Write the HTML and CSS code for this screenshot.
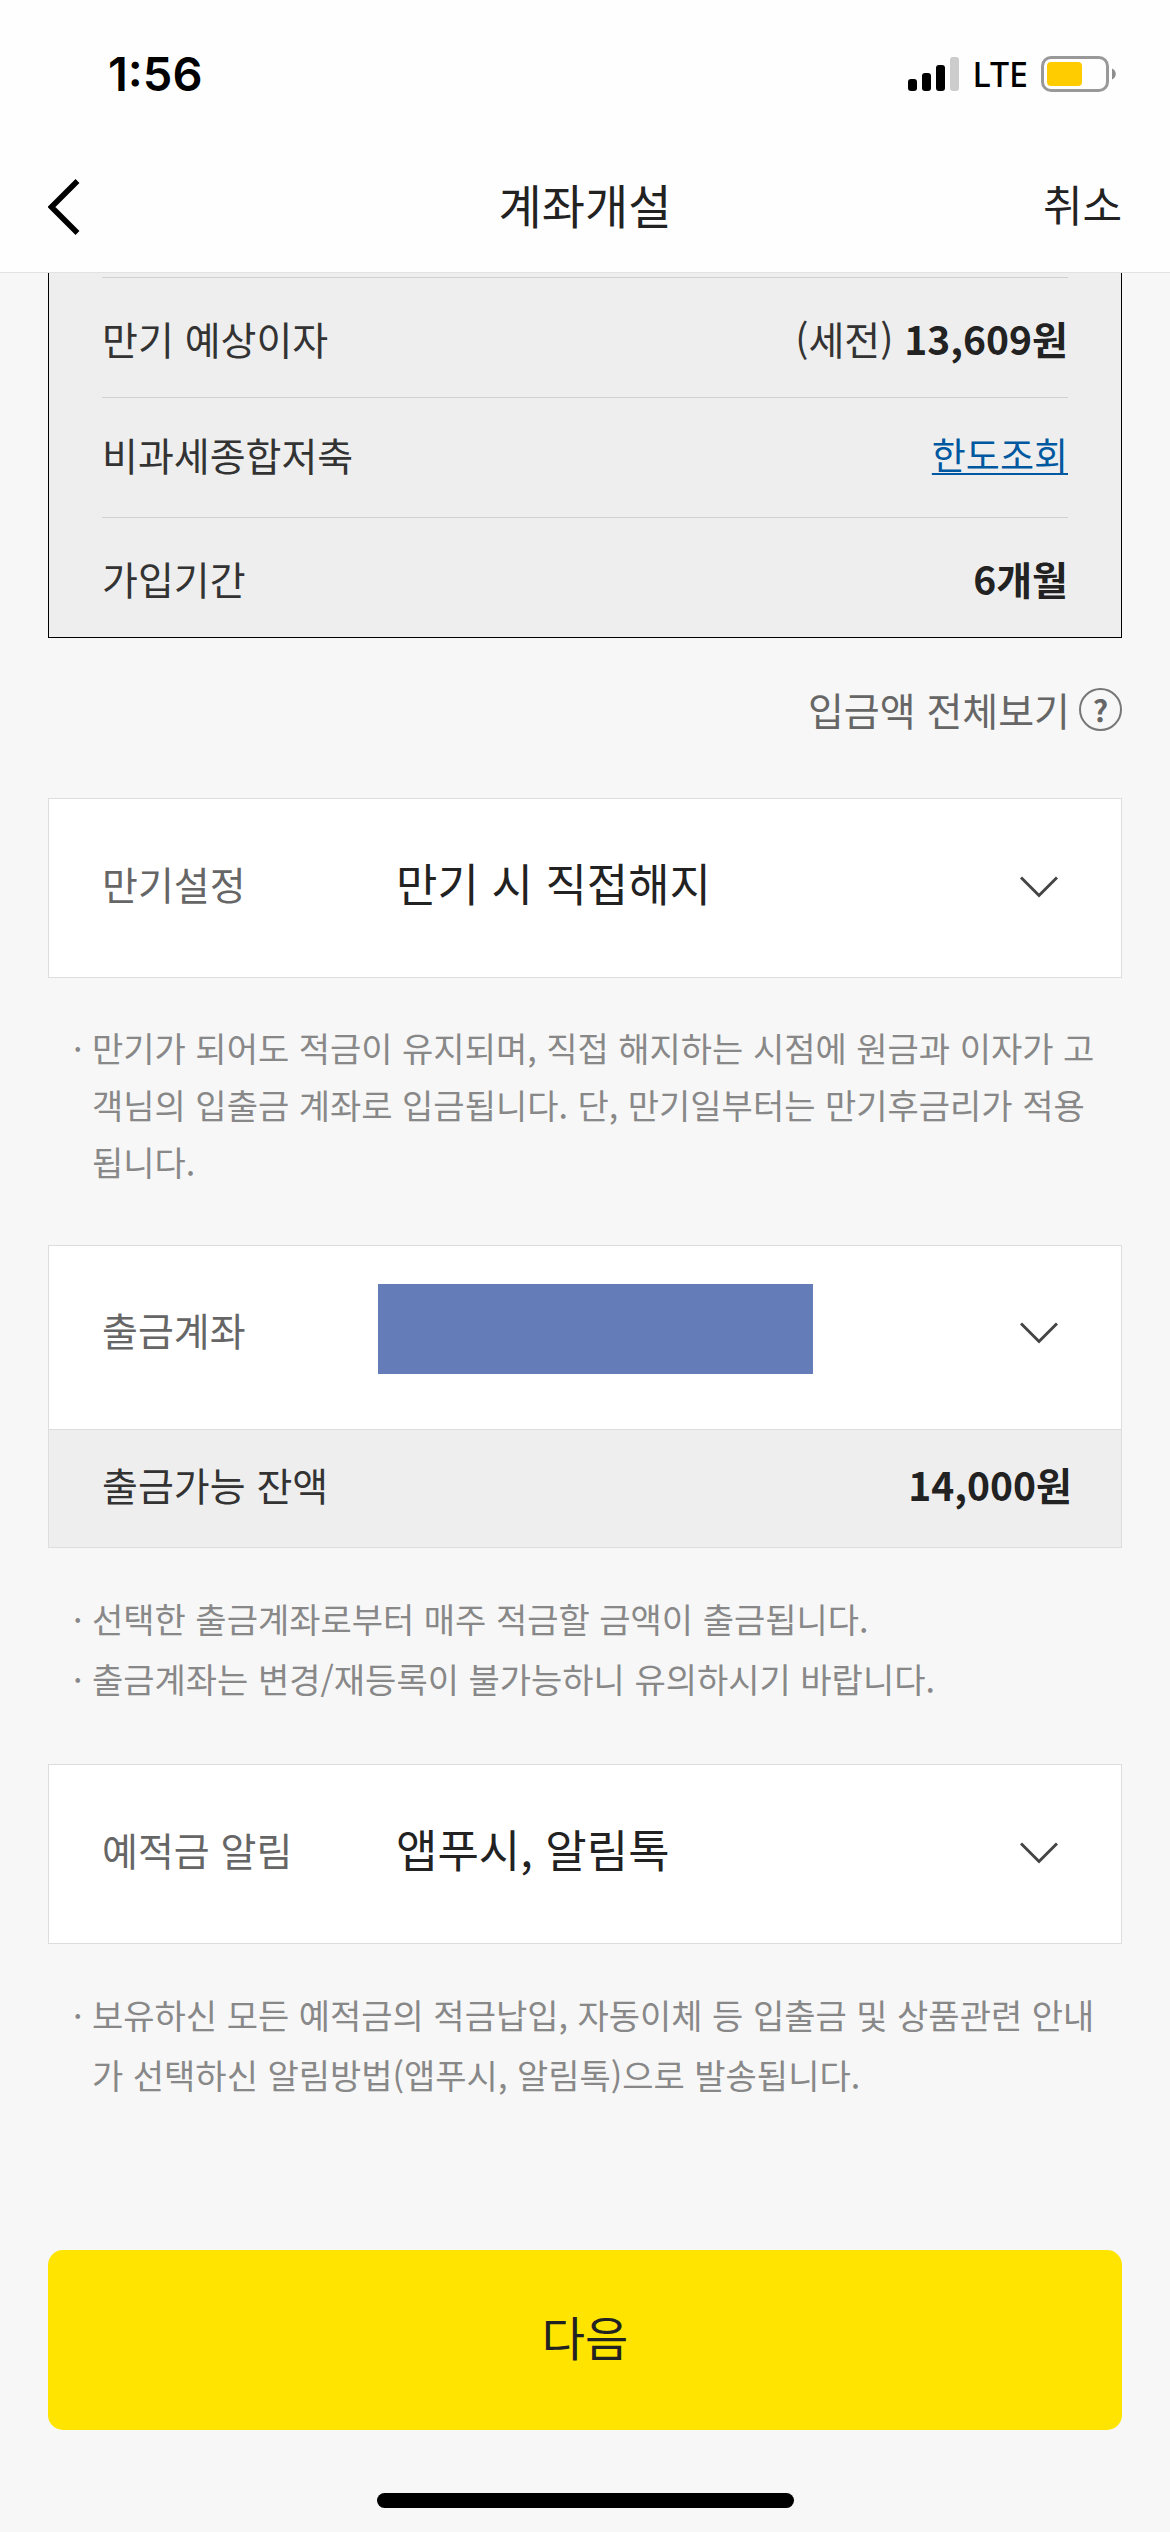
FILE: index.html
```html
<!DOCTYPE html>
<html lang="ko">
<head>
<meta charset="utf-8">
<meta name="viewport" content="width=device-width, initial-scale=1">
<title>계좌개설</title>
<link rel="stylesheet" href="styles.css">
</head>
<body>
<div class="screen">
  <div class="status-bar">
    <span class="clock">1:56</span>
    <div class="indicators">
      <svg class="signal" viewBox="0 0 51 34" aria-hidden="true">
        <rect x="0" y="22" width="9" height="12" rx="3"/>
        <rect x="14" y="16" width="9" height="18" rx="3"/>
        <rect x="28" y="8" width="9" height="26" rx="3"/>
        <rect x="42" y="0" width="9" height="34" rx="3" fill="#ccc"/>
      </svg>
      <span class="network">LTE</span>
      <svg class="battery" viewBox="0 0 76 36" aria-hidden="true">
        <rect x="1.5" y="1.5" width="65" height="33" rx="8.5" fill="none" stroke="#999" stroke-width="3"/>
        <rect x="6" y="6" width="35" height="24" rx="4" fill="#fc0"/>
        <path d="M71 12.5c5 2 5 9 0 11z" fill="#8e8e8e"/>
      </svg>
    </div>
  </div>

  <header class="nav-bar">
    <button class="back" type="button" aria-label="뒤로">
      <svg viewBox="0 0 32 56" aria-hidden="true"><path d="M29.5 2L3.5 28l26 26" fill="none" stroke="#000" stroke-width="5.5"/></svg>
    </button>
    <h1 class="title">계좌개설</h1>
    <button class="cancel" type="button">취소</button>
  </header>

  <main class="content">
    <dl class="summary">
      <div class="summary-row">
        <dt>만기 예상이자</dt>
        <dd>(세전) <strong>13,609원</strong></dd>
      </div>
      <div class="summary-row summary-row-link">
        <dt>비과세종합저축</dt>
        <dd><a class="limit-link" href="#limit">한도조회</a></dd>
      </div>
      <div class="summary-row">
        <dt>가입기간</dt>
        <dd><strong>6개월</strong></dd>
      </div>
    </dl>

    <button class="view-all" type="button">
      <span>입금액 전체보기</span>
      <span class="help">?</span>
    </button>

    <section class="card">
      <div class="field">
        <label for="maturity">만기설정</label>
        <select id="maturity" class="choice"><option>만기 시 직접해지</option></select>
        <svg class="chevron" viewBox="0 0 38 22" aria-hidden="true"><path d="M1 1.5l18 18 18-18"/></svg>
      </div>
    </section>
    <ul class="notes notes-tight">
      <li>만기가 되어도 적금이 유지되며, 직접 해지하는 시점에 원금과 이자가 고객님의 입출금 계좌로 입금됩니다. 단, 만기일부터는 만기후금리가 적용됩니다.</li>
    </ul>

    <section class="card">
      <div class="field field-account">
        <label for="account">출금계좌</label>
        <select id="account" class="choice choice-masked"><option value=""></option></select>
        <svg class="chevron" viewBox="0 0 38 22" aria-hidden="true"><path d="M1 1.5l18 18 18-18"/></svg>
      </div>
      <div class="balance">
        <span>출금가능 잔액</span>
        <strong>14,000원</strong>
      </div>
    </section>
    <ul class="notes">
      <li>선택한 출금계좌로부터 매주 적금할 금액이 출금됩니다.</li>
      <li>출금계좌는 변경/재등록이 불가능하니 유의하시기 바랍니다.</li>
    </ul>

    <section class="card">
      <div class="field">
        <label for="alerts">예적금 알림</label>
        <select id="alerts" class="choice"><option>앱푸시, 알림톡</option></select>
        <svg class="chevron" viewBox="0 0 38 22" aria-hidden="true"><path d="M1 1.5l18 18 18-18"/></svg>
      </div>
    </section>
    <ul class="notes">
      <li>보유하신 모든 예적금의 적금납입, 자동이체 등 입출금 및 상품관련 안내가 선택하신 알림방법(앱푸시, 알림톡)으로 발송됩니다.</li>
    </ul>
  </main>

  <footer class="footer">
    <button class="next" type="button">다음</button>
    <div class="home-indicator"></div>
  </footer>
</div>
</body>
</html>
```
FILE: styles.css
```css
* {
  box-sizing: border-box;
}

body {
  margin: 0;
  background: #f7f7f7;
  color: #333;
  font-family: "Noto Sans CJK KR", sans-serif;
  font-size: 39px;
  line-height: 60px;
}

button,
select {
  margin: 0;
  padding: 0;
  border: 0;
  background: none;
  color: inherit;
  font: inherit;
  appearance: none;
}

.screen {
  display: flex;
  flex-direction: column;
  min-height: 100vh;
}

/* Status bar */

.status-bar {
  display: flex;
  align-items: center;
  justify-content: space-between;
  height: 148px;
  padding: 0 53px 0 108px;
  background: #fefefe;
}

.clock {
  color: #000;
  font-family: Inter, sans-serif;
  font-size: 47px;
  font-weight: 600;
}

.indicators {
  display: flex;
  align-items: center;
  gap: 13px;
}

.signal {
  width: 51px;
  height: 34px;
}

.network {
  color: #000;
  font-family: "Noto Sans", sans-serif;
  font-size: 34px;
  font-weight: 500;
}

.battery {
  width: 76px;
  height: 36px;
}

/* Navigation bar */

.nav-bar {
  display: grid;
  grid-template-columns: 1fr auto 1fr;
  align-items: center;
  height: 125px;
  padding: 0 48px 6px;
  border-bottom: 1px solid #e2e2e2;
  background: #fefefe;
}

.back {
  justify-self: start;
  width: 32px;
  height: 56px;
}

.back svg {
  display: block;
  width: 32px;
  height: 56px;
}

.title {
  margin: 0;
  padding-bottom: 6px;
  color: #222;
  font-size: 47px;
  font-weight: 400;
}

.cancel {
  justify-self: end;
  padding-bottom: 8px;
  color: #222;
  font-size: 43px;
}

/* Content */

.content {
  flex: 1;
  padding: 0 48px;
}

.summary {
  margin: 0;
  padding: 4px 53px 0;
  border: 1px solid #000;
  border-top: 0;
  background: #eee;
}

.summary-row {
  display: flex;
  align-items: center;
  justify-content: space-between;
  height: 120px;
  border-top: 1px solid #d0d0d0;
}

.summary-row-link {
  padding-bottom: 8px;
}

.summary dd {
  margin: 0;
}

strong {
  color: #222;
  font-weight: 700;
}

.limit-link {
  color: #0059a0;
  font-size: 37px;
  text-decoration-thickness: 2px;
  text-underline-offset: 3px;
}

.view-all {
  display: flex;
  align-items: center;
  gap: 9px;
  margin: 41px 0 59px auto;
  color: #666;
}

.help {
  width: 43px;
  height: 43px;
  border: 2px solid #777;
  border-radius: 50%;
  font-size: 30px;
  font-weight: 700;
  line-height: 38px;
  text-align: center;
}

.card {
  border: 1px solid #ddd;
  background: #fff;
}

.field {
  display: grid;
  grid-template-columns: 276px 1fr 38px;
  align-items: center;
  height: 178px;
  padding: 0 63px 10px 53px;
  color: #666;
}

.field-account {
  height: 183px;
  padding-bottom: 18px;
}

.choice {
  width: 100%;
  padding-left: 18px;
  color: #222;
  font-size: 45px;
}

.choice-masked {
  width: 435px;
  max-width: 100%;
  height: 90px;
  background: #647db9;
}

.chevron {
  width: 38px;
  height: 22px;
  margin-top: 8px;
  fill: none;
  stroke: #444;
  stroke-width: 3;
}

.balance {
  display: flex;
  align-items: center;
  justify-content: space-between;
  height: 118px;
  padding: 0 49px 10px 53px;
  border-top: 1px solid #ddd;
  background: #eee;
}

.notes {
  margin: 41px 0 55px;
  padding: 0 20px 0 44px;
  color: #888;
  font-size: 34px;
  list-style: none;
}

.notes-tight {
  line-height: 57px;
}

.notes li::before {
  content: "·";
  float: left;
  width: 19px;
  margin-left: -19px;
}

/* Footer */

.footer {
  display: flex;
  flex-direction: column;
  align-items: center;
  padding: 0 48px 24px;
}

.next {
  width: 100%;
  height: 180px;
  margin-bottom: 63px;
  padding-bottom: 8px;
  border-radius: 15px;
  background: #ffe400;
  color: #222;
  font-size: 47px;
}

.home-indicator {
  width: 417px;
  height: 15px;
  border-radius: 8px;
  background: #000;
}
```
